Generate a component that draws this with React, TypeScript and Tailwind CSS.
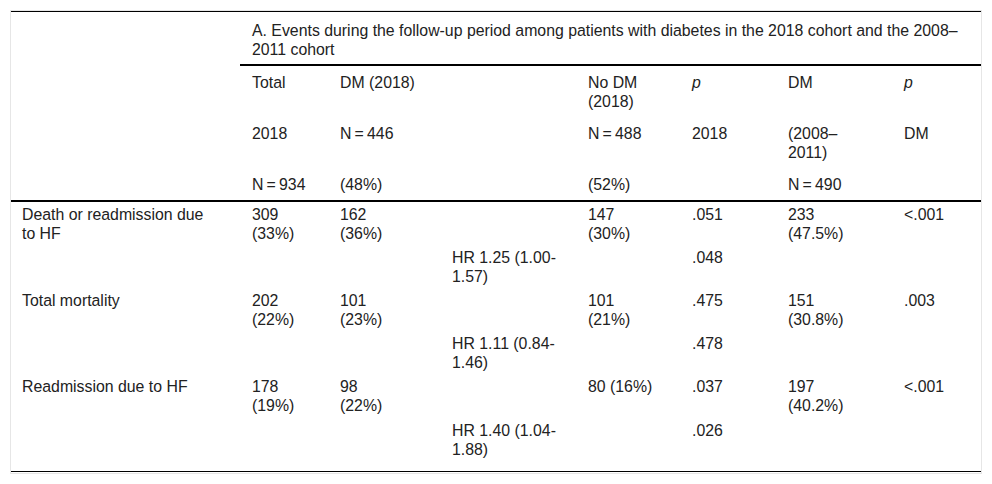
import React from 'react';

type Cell = { text: React.ReactNode; span?: number };

const headRows: Cell[][] = [
	[
		{ text: 'Total' },
		{ text: 'DM (2018)', span: 2 },
		{ text: 'No DM\n(2018)' },
		{ text: <i>p</i> },
		{ text: 'DM' },
		{ text: <i>p</i> },
	],
	[
		{ text: '2018' },
		{ text: 'N\u2009=\u2009446', span: 2 },
		{ text: 'N\u2009=\u2009488' },
		{ text: '2018' },
		{ text: '(2008–\n2011)' },
		{ text: 'DM' },
	],
	[
		{ text: 'N\u2009=\u2009934' },
		{ text: '(48%)', span: 2 },
		{ text: '(52%)' },
		{ text: '' },
		{ text: 'N\u2009=\u2009490' },
		{ text: '' },
	],
];

const bodyRows: string[][] = [
	['Death or readmission due\nto HF', '309\n(33%)', '162\n(36%)', '', '147\n(30%)', '.051', '233\n(47.5%)', '<.001'],
	['', '', '', 'HR 1.25 (1.00-\n1.57)', '', '.048', '', ''],
	['Total mortality', '202\n(22%)', '101\n(23%)', '', '101\n(21%)', '.475', '151\n(30.8%)', '.003'],
	['', '', '', 'HR 1.11 (0.84-\n1.46)', '', '.478', '', ''],
	['Readmission due to HF', '178\n(19%)', '98\n(22%)', '', '80 (16%)', '.037', '197\n(40.2%)', '<.001'],
	['', '', '', 'HR 1.40 (1.04-\n1.88)', '', '.026', '', ''],
];

export default function App() {
	return (
		<div className="w-[992px] h-[484px] bg-white pt-[10px] pl-[10px] font-['Liberation_Sans',Arial,sans-serif] text-[15.85px] leading-[19px] text-[#222]">
			<div className="w-[972px] border border-[#e6e6e6] pb-[1px]">
				<table className="table-fixed w-[970px] border-separate border-spacing-0 border-t border-b border-black">
					<colgroup>
						<col className="w-[229px]" />
						<col className="w-[88px]" />
						<col className="w-[112px]" />
						<col className="w-[136px]" />
						<col className="w-[104px]" />
						<col className="w-[96px]" />
						<col className="w-[116px]" />
						<col className="w-[89px]" />
					</colgroup>
					<thead>
						<tr>
							<th rowSpan={4} className="border-b-2 border-black" />
							<th colSpan={7} className="text-left font-normal align-top pl-3 pr-3 pt-[9px] pb-[5px] border-b-2 border-black">
								A. Events during the follow-up period among patients with diabetes in the 2018 cohort and the 2008–2011 cohort
							</th>
						</tr>
						{headRows.map((row, i) => (
							<tr key={i}>
								{row.map((c, j) => (
									<th
										key={j}
										colSpan={c.span}
										className={
											'text-left font-normal align-top whitespace-pre-line pl-3 pr-2 pt-[6.5px] pb-[6.5px]' +
											(i === headRows.length - 1 ? ' border-b-2 border-black' : '')
										}
									>
										{c.text}
									</th>
								))}
							</tr>
						))}
					</thead>
					<tbody>
						{bodyRows.map((row, i) => (
							<tr key={i}>
								{row.map((t, j) => (
									<td
										key={j}
										className={
											'align-top whitespace-pre-line pr-2 pt-[2.6px] ' +
											(j === 0 ? 'pl-[11px] ' : 'pl-3 ') +
											(i === bodyRows.length - 1 ? 'pb-[12.5px]' : 'pb-[2.6px]')
										}
									>
										{t}
									</td>
								))}
							</tr>
						))}
					</tbody>
				</table>
			</div>
		</div>
	);
}
